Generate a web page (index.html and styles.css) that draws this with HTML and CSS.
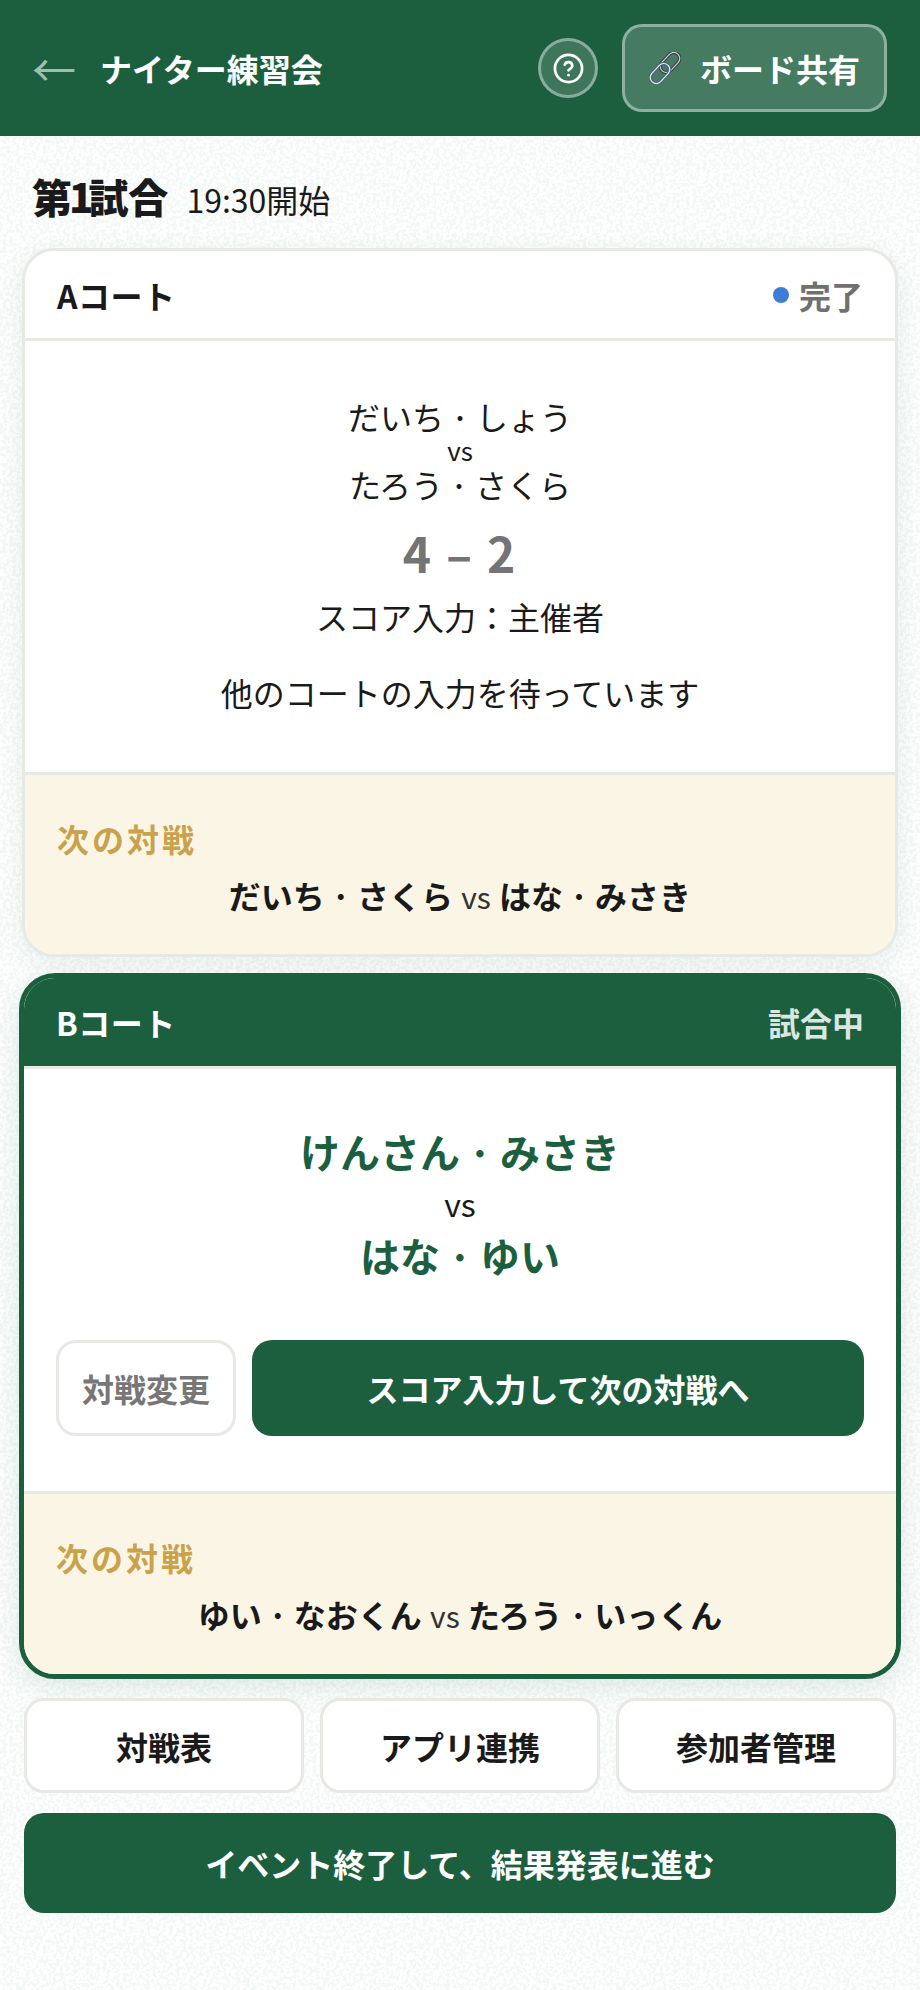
FILE: index.html
```html
<!DOCTYPE html>
<html lang="ja">
<head>
<meta charset="utf-8">
<title>ナイター練習会</title>
<link rel="stylesheet" href="styles.css">
</head>
<body>
<header class="topbar">
  <span class="back">←</span>
  <h1 class="event-title">ナイター練習会</h1>
  <button class="help" aria-label="ヘルプ">
    <svg class="help-icon" viewBox="0 0 24 24" fill="none" stroke="#fff" stroke-width="2.1" stroke-linecap="round" stroke-linejoin="round"><circle cx="12" cy="12" r="10.5"/><path d="M9.1 9a3 3 0 0 1 5.8 1c0 2-2.9 2.6-2.9 3.4"/><path d="M12 17.2h.01"/></svg>
  </button>
  <button class="share">
    <svg class="link-icon" viewBox="0 0 32 32" fill="none">
      <g stroke="#3f4347" stroke-width="3.4">
        <rect x="15" y="-1" width="12" height="23" rx="6" transform="rotate(43 21 10.5)"/>
      </g>
      <g stroke="#c8ced3" stroke-width="1.2">
        <rect x="15" y="-1" width="12" height="23" rx="6" transform="rotate(43 21 10.5)"/>
      </g>
      <g stroke="#4f6476" stroke-width="3.4">
        <rect x="5" y="10" width="12" height="23" rx="6" transform="rotate(43 11 21.5)"/>
      </g>
      <g stroke="#e6eef4" stroke-width="1.2">
        <rect x="5" y="10" width="12" height="23" rx="6" transform="rotate(43 11 21.5)"/>
      </g>
    </svg>
    <span>ボード共有</span>
  </button>
</header>

<main class="page">
  <div class="round-title">
    <h2 class="round-name">第<span class="num">1</span>試合</h2>
    <span class="round-time">19:30開始</span>
  </div>

  <section class="court">
    <div class="court-head">
      <span class="court-name">Aコート</span>
      <span class="status"><i class="dot"></i>完了</span>
    </div>
    <div class="court-body done">
      <p class="pair">だいち<span class="sep">・</span>しょう</p>
      <p class="vs">vs</p>
      <p class="pair">たろう<span class="sep">・</span>さくら</p>
      <p class="score">4 – 2</p>
      <p class="plain score-by">スコア入力：主催者</p>
      <p class="plain waiting">他のコートの入力を待っています</p>
    </div>
    <div class="next">
      <p class="next-label">次の対戦</p>
      <p class="next-match">だいち<span class="sep">・</span>さくら <span class="next-vs">vs</span> はな<span class="sep">・</span>みさき</p>
    </div>
  </section>

  <section class="court active">
    <div class="court-head">
      <span class="court-name">Bコート</span>
      <span class="status">試合中</span>
    </div>
    <div class="court-body live">
      <p class="pair-big">けんさん<span class="sep">・</span>みさき</p>
      <p class="vs-big">vs</p>
      <p class="pair-big">はな<span class="sep">・</span>ゆい</p>
      <div class="actions">
        <button class="btn btn-change">対戦変更</button>
        <button class="btn btn-primary">スコア入力して次の対戦へ</button>
      </div>
    </div>
    <div class="next">
      <p class="next-label">次の対戦</p>
      <p class="next-match">ゆい<span class="sep">・</span>なおくん <span class="next-vs">vs</span> たろう<span class="sep">・</span>いっくん</p>
    </div>
  </section>

  <nav class="tools">
    <button class="btn tool">対戦表</button>
    <button class="btn tool">アプリ連携</button>
    <button class="btn tool">参加者管理</button>
  </nav>
  <button class="btn finish">イベント終了して、結果発表に進む</button>
</main>
</body>
</html>
```
FILE: styles.css
```css
* { box-sizing: border-box; }
html, body { margin: 0; padding: 0; }
body {
  width: 920px;
  height: 1990px;
  overflow: hidden;
  font-family: "Noto Sans CJK JP", "Noto Sans", sans-serif;
  color: #1a1a1a;
  background-color: #fdfefd;
  background-image: url("data:image/svg+xml,%3Csvg xmlns='http://www.w3.org/2000/svg' width='300' height='300'%3E%3Cfilter id='n' x='0' y='0' width='100%25' height='100%25'%3E%3CfeTurbulence type='fractalNoise' baseFrequency='.3' numOctaves='2' stitchTiles='stitch'/%3E%3CfeColorMatrix values='0 0 0 0 .9 0 0 0 0 .93 0 0 0 0 .92 0 0 0 14 -6.6'/%3E%3C/filter%3E%3Crect width='300' height='300' filter='url(%23n)'/%3E%3C/svg%3E");
}
p, h1, h2 { margin: 0; }
button { font-family: inherit; cursor: pointer; }

.topbar {
  height: 136px;
  background: #1c5f3f;
  display: flex;
  align-items: center;
  padding: 0 32px;
  color: #fff;
}
.back {
  font-size: 44px;
  line-height: 1;
  width: 44px;
  color: rgba(255,255,255,.6);
  margin-right: 24px;
}
.event-title {
  font-size: 32px;
  font-weight: 700;
  line-height: 1.2;
  flex: 1;
}
.help {
  width: 60px;
  height: 60px;
  border-radius: 50%;
  border: 3px solid rgba(255,255,255,.4);
  background: rgba(255,255,255,.15);
  padding: 0;
  display: flex;
  align-items: center;
  justify-content: center;
  margin-right: 24px;
}
.help-icon { width: 31px; height: 31px; }
.share {
  width: 265px;
  height: 88px;
  margin-right: 1px;
  border-radius: 20px;
  border: 3px solid rgba(255,255,255,.4);
  background: rgba(255,255,255,.18);
  color: #fff;
  font-size: 32px;
  font-weight: 700;
  display: flex;
  align-items: center;
  justify-content: center;
  gap: 19px;
  padding: 0;
}
.link-icon { width: 32px; height: 32px; }

.page { padding: 0 22px 0 22px; }
.round-title {
  display: flex;
  align-items: baseline;
  gap: 18px;
  padding: 36px 10px 0;
  height: 112px;
}
.round-name { font-size: 40px; font-weight: 900; line-height: 1.2; }
.num { letter-spacing: -5px; margin-left: -3px; }
.round-time { font-size: 32px; font-weight: 400; }
.sep {
  display: inline-block;
  width: 1.39em;
  font-size: .72em;
  text-align: center;
  vertical-align: .12em;
  line-height: 1;
}

.court {
  background: #fff;
  border: 3px solid #e6e9e4;
  border-radius: 32px;
  overflow: hidden;
  box-shadow: 0 6px 24px rgba(28,95,63,.08);
}
.court-head {
  height: 90px;
  display: flex;
  align-items: center;
  justify-content: space-between;
  padding: 0 32px;
  border-bottom: 3px solid #e6e9e4;
}
.court-name { font-size: 32px; font-weight: 700; letter-spacing: .5px; }
.status {
  display: flex;
  align-items: center;
  font-size: 32px;
  font-weight: 700;
  color: #707070;
}
.dot {
  width: 16px;
  height: 16px;
  border-radius: 50%;
  background: #3b7dd8;
  margin-right: 10px;
}
.court-body { text-align: center; }
.done { height: 431px; padding-top: 58px; }
.pair { font-size: 32px; line-height: 34px; }
.vs { font-size: 26px; line-height: 34px; }
.score { font-size: 48px; font-weight: 700; line-height: 60px; color: #747474; margin-top: 21px; letter-spacing: 2px; }
.plain { font-size: 32px; line-height: 48px; }
.score-by { margin-top: 10px; }
.waiting { margin-top: 28px; }

.next {
  background: #fbf5e6;
  border-top: 3px solid #e6e9e4;
  padding: 40px 32px 0;
  height: 182px;
}
.next-label { font-size: 32px; font-weight: 700; color: #c9a24a; line-height: 46px; letter-spacing: 3px; }
.next-match { font-size: 32px; font-weight: 700; line-height: 46px; text-align: center; margin-top: 11px; }
.next-vs { font-size: 30px; font-weight: 400; color: #333; margin: 0 1px; }

.active {
  border: 5px solid #1c5f3f;
  margin: 16px -3px 0;
  border-radius: 36px;
  box-shadow: 0 8px 26px rgba(28,95,63,.12);
}
.active .court-head {
  background: #1c5f3f;
  color: #fff;
  height: 91px;
  border-bottom-color: #e6e9e4;
}
.active .status { color: rgba(255,255,255,.85); }
.active .court-name { color: #fff; }
.live { height: 422px; padding-top: 55px; }
.pair-big { font-size: 40px; font-weight: 700; color: #1c5f3f; line-height: 54px; }
.vs-big { font-size: 32px; line-height: 50px; }
.actions { display: flex; gap: 16px; margin: 58px 32px 0; }
.btn {
  border-radius: 20px;
  font-size: 32px;
  font-weight: 700;
  display: flex;
  align-items: center;
  justify-content: center;
  padding: 0;
}
.btn-change {
  width: 180px;
  height: 96px;
  background: #fff;
  border: 3px solid #e8e8e4;
  color: #777;
}
.btn-primary {
  flex: 1;
  height: 96px;
  background: #1c5f3f;
  border: none;
  color: #fff;
}
.active .next { height: 183px; }

.tools { display: flex; gap: 16px; margin: 19px 2px 0; }
.tool {
  flex: 1;
  height: 95px;
  background: #fff;
  border: 3px solid #e8e8e4;
  color: #1a1a1a;
}
.finish {
  width: 872px;
  height: 100px;
  margin: 20px 2px 0;
  background: #1c5f3f;
  border: none;
  color: #fff;
}
```
